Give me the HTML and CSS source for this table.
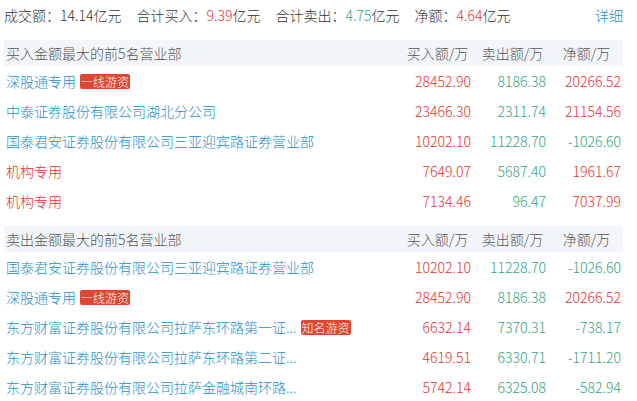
FILE: index.html
```html
<!DOCTYPE html>
<html lang="zh-CN">
<head>
<meta charset="utf-8">
<title>龙虎榜</title>
<link rel="stylesheet" href="styles.css">
</head>
<body>
<div class="wrap">
  <div class="summary">
    <div class="sum-items">
      <span class="item">成交额：<span class="v">14.14</span>亿元</span>
      <span class="item">合计买入：<span class="v up">9.39</span>亿元</span>
      <span class="item">合计卖出：<span class="v down">4.75</span>亿元</span>
      <span class="item">净额：<span class="v up">4.64</span>亿元</span>
    </div>
    <a class="more">详细</a>
  </div>

  <div class="section">
    <div class="row head">
      <div class="name">买入金额最大的前5名营业部</div>
      <div class="num hc">买入额/万</div>
      <div class="num hc">卖出额/万</div>
      <div class="num hc">净额/万</div>
    </div>
    <div class="row">
      <div class="name"><span class="link">深股通专用</span><span class="tag">一线游资</span></div>
      <div class="num up">28452.90</div>
      <div class="num down">8186.38</div>
      <div class="num up">20266.52</div>
    </div>
    <div class="row">
      <div class="name"><span class="link">中泰证券股份有限公司湖北分公司</span></div>
      <div class="num up">23466.30</div>
      <div class="num down">2311.74</div>
      <div class="num up">21154.56</div>
    </div>
    <div class="row">
      <div class="name"><span class="link">国泰君安证券股份有限公司三亚迎宾路证券营业部</span></div>
      <div class="num up">10202.10</div>
      <div class="num down">11228.70</div>
      <div class="num down">-1026.60</div>
    </div>
    <div class="row">
      <div class="name"><span class="link inst">机构专用</span></div>
      <div class="num up">7649.07</div>
      <div class="num down">5687.40</div>
      <div class="num up">1961.67</div>
    </div>
    <div class="row">
      <div class="name"><span class="link inst">机构专用</span></div>
      <div class="num up">7134.46</div>
      <div class="num down">96.47</div>
      <div class="num up">7037.99</div>
    </div>
  </div>

  <div class="section">
    <div class="row head">
      <div class="name">卖出金额最大的前5名营业部</div>
      <div class="num hc">买入额/万</div>
      <div class="num hc">卖出额/万</div>
      <div class="num hc">净额/万</div>
    </div>
    <div class="row">
      <div class="name"><span class="link">国泰君安证券股份有限公司三亚迎宾路证券营业部</span></div>
      <div class="num up">10202.10</div>
      <div class="num down">11228.70</div>
      <div class="num down">-1026.60</div>
    </div>
    <div class="row">
      <div class="name"><span class="link">深股通专用</span><span class="tag">一线游资</span></div>
      <div class="num up">28452.90</div>
      <div class="num down">8186.38</div>
      <div class="num up">20266.52</div>
    </div>
    <div class="row">
      <div class="name"><span class="link">东方财富证券股份有限公司拉萨东环路第一证...</span><span class="tag">知名游资</span></div>
      <div class="num up">6632.14</div>
      <div class="num down">7370.31</div>
      <div class="num down">-738.17</div>
    </div>
    <div class="row">
      <div class="name"><span class="link">东方财富证券股份有限公司拉萨东环路第二证...</span></div>
      <div class="num up">4619.51</div>
      <div class="num down">6330.71</div>
      <div class="num down">-1711.20</div>
    </div>
    <div class="row">
      <div class="name"><span class="link">东方财富证券股份有限公司拉萨金融城南环路...</span></div>
      <div class="num up">5742.14</div>
      <div class="num down">6325.08</div>
      <div class="num down">-582.94</div>
    </div>
  </div>
</div>
</body>
</html>
```

FILE: styles.css
```css
* { box-sizing: border-box; }
html, body {
  margin: 0;
  padding: 0;
  background: #ffffff;
}
body {
  font-family: "Microsoft YaHei", "Noto Sans CJK SC", "Noto Sans", sans-serif;
  font-size: 14px;
  font-weight: 300;
  color: #333333;
}
.wrap {
  width: 627px;
  padding: 0 4px;
}
.summary {
  display: flex;
  justify-content: space-between;
  align-items: center;
  height: 30px;
  line-height: 30px;
  margin-bottom: 10px;
}
.sum-items {
  display: flex;
  gap: 15px;
}
.item { white-space: nowrap; }
.more {
  color: #1b8fd2;
  cursor: pointer;
}
.up { color: #e93030; }
.down { color: #33a47e; }

.section { margin-bottom: 10px; }
.row {
  display: flex;
  align-items: center;
  height: 30px;
  line-height: 30px;
}
.row.head {
  height: 26px;
  line-height: 26px;
  background: #f2f6fa;
  color: #555555;
}
.name {
  flex: 1;
  display: flex;
  align-items: center;
  padding-left: 2px;
  white-space: nowrap;
  overflow: hidden;
}
.link { color: #1b8fd2; }
.link.inst { color: #e93030; }
.tag {
  display: inline-block;
  margin-left: 4px;
  padding: 0 1px;
  height: 15px;
  line-height: 15px;
  font-size: 12px;
  color: #ffffff;
  background: #e0462f;
  border-radius: 2px;
}
.num {
  width: 75px;
  text-align: right;
  padding-right: 2px;
  white-space: nowrap;
}
.num.hc {
  text-align: center;
  padding-right: 0;
  padding-left: 4px;
}
.row.head .num:last-child { padding-right: 2px; }
```
